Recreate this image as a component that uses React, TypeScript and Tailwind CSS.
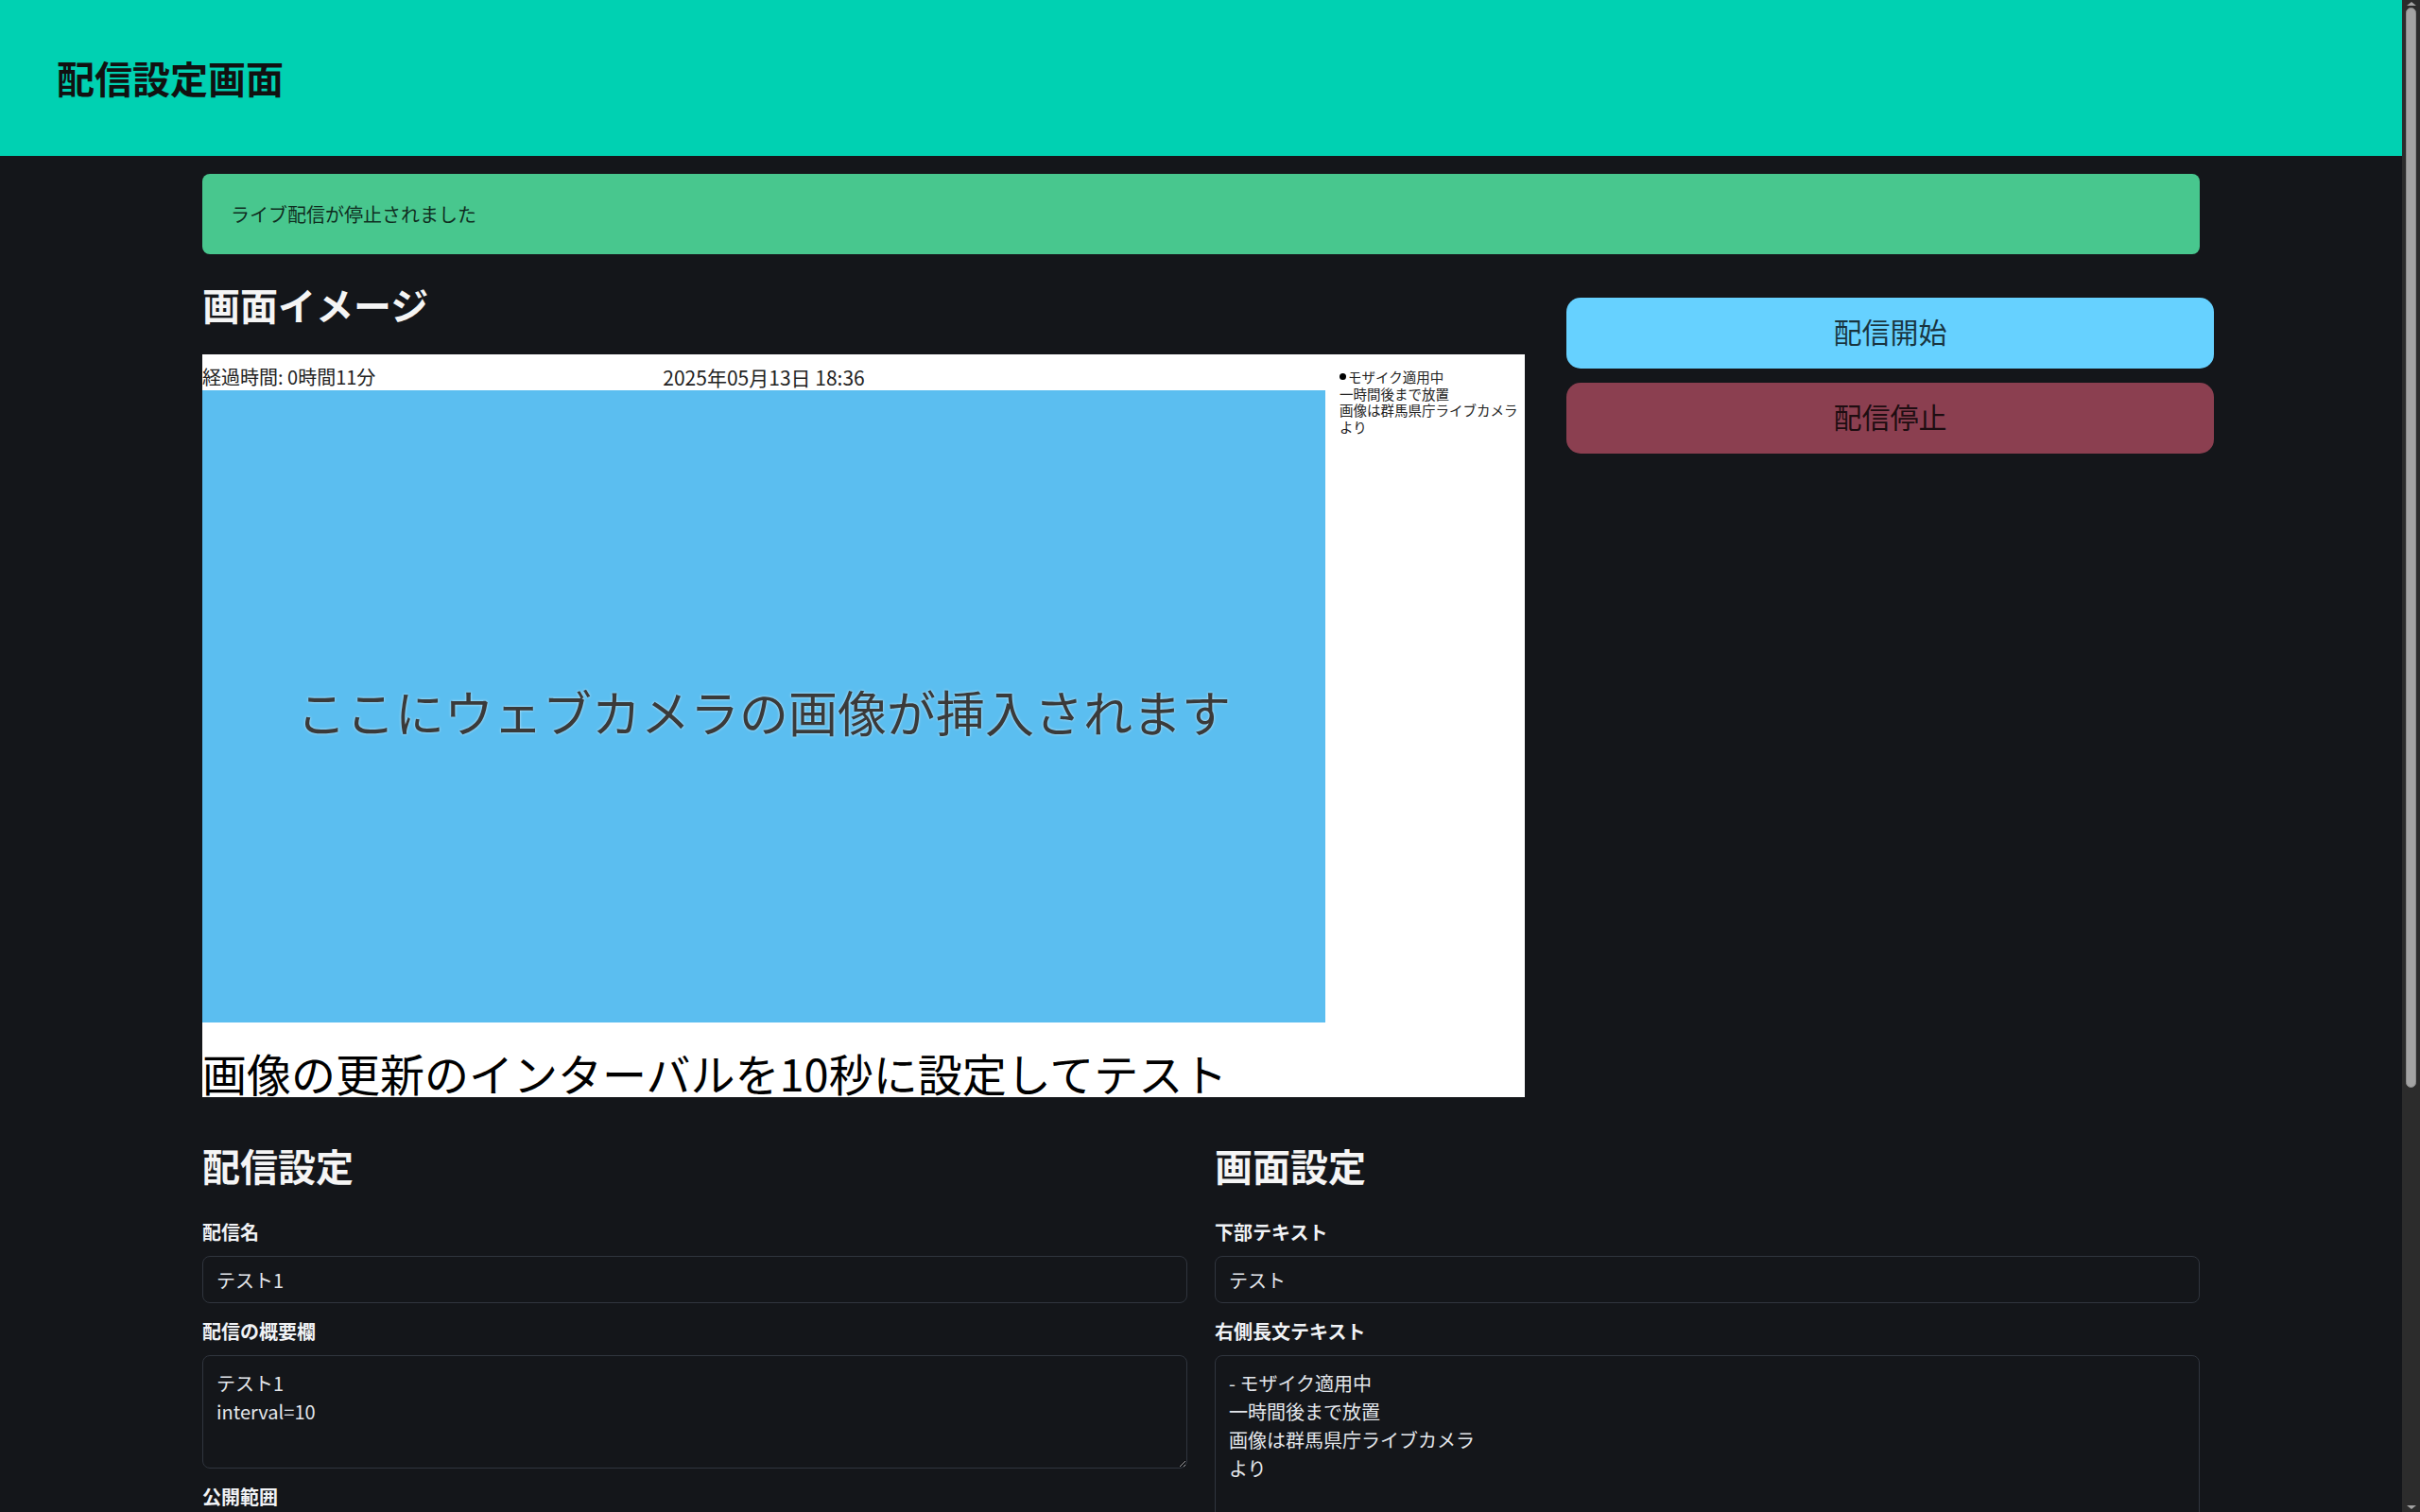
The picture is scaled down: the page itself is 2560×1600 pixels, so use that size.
import { useState } from 'react';

const rightText = `- モザイク適用中
一時間後まで放置
画像は群馬県庁ライブカメラ
より`;

function Field({ label, children }: { label: string; children: React.ReactNode }) {
  return (
    <div className="mb-[15px]">
      <label className="block mb-[10px] text-[20px] leading-[30px] font-bold text-[#f0f2f5]">{label}</label>
      {children}
    </div>
  );
}

function Preview() {
  return (
    <div className="flex w-[1399px] h-[786px] bg-white text-[#222]">
      <div className="flex flex-col w-[1188px]">
        <div className="relative flex items-end h-[38px] pb-[4px] text-[20px] leading-[20px]">
          <span>経過時間: 0時間11分</span>
          <span className="absolute left-0 right-0 bottom-[4px] text-center text-[21px]">2025年05月13日 18:36</span>
        </div>
        <div className="flex items-center justify-center h-[669px] bg-[#5bbef0]">
          <span className="pt-[10px] text-[52px] leading-none text-[#3a3a3a] [text-shadow:0_0_3px_rgba(255,255,255,0.7)]">
            ここにウェブカメラの画像が挿入されます
          </span>
        </div>
        <div className="flex items-end h-[79px] pb-[3px] text-[47px] leading-none text-black whitespace-nowrap">
          画像の更新のインターバルを10秒に設定してテスト
        </div>
      </div>
      <div className="w-[211px] pt-[15px] pl-[15px] text-[14.5px] leading-[17.7px]">
        <div className="flex items-center">
          <span className="mr-[2px] w-[7px] h-[7px] rounded-full bg-black" />
          モザイク適用中
        </div>
        <div>一時間後まで放置</div>
        <div>画像は群馬県庁ライブカメラ</div>
        <div>より</div>
      </div>
    </div>
  );
}

// stand-in for the dark browser scrollbar seen in the screenshot
function ScrollTrack() {
  return (
    <div className="flex flex-col items-center w-[19px] h-screen shrink-0 bg-[#2c2c2c]">
      <div className="mt-[2px] w-0 h-0 border-x-[5px] border-x-transparent border-b-[4px] border-b-[#a3a3a3]" />
      <div className="mt-[2px] w-[11px] h-[1143px] rounded-full bg-[#a3a3a3] border border-[#8a8a8a]" />
      <div className="flex-1" />
      <div className="mb-[3px] w-0 h-0 border-x-[5px] border-x-transparent border-t-[4px] border-t-[#a3a3a3]" />
    </div>
  );
}

export default function App() {
  const [streaming, setStreaming] = useState(false);

  const inputCls =
    'w-full h-[50px] px-[14px] rounded-[8px] border border-[#30353e] bg-[#14161a] text-[20px] text-[#e3e6eb] outline-none';
  const areaCls =
    'block w-full px-[14px] py-[14px] rounded-[8px] border border-[#30353e] bg-[#14161a] text-[20px] leading-[30px] text-[#e3e6eb] outline-none';

  return (
    <div className="flex h-screen bg-[#14161a] [color-scheme:dark] font-['Noto_Sans_CJK_JP','Noto_Sans',sans-serif]">
      <div className="flex-1 h-screen overflow-y-auto [scrollbar-width:none]">
        <div className="min-h-[2200px]">
          <header className="flex items-center h-[165px] px-[60px] bg-[#00d1b2]">
            <h1 className="text-[40px] leading-[45px] font-bold text-[#111]">配信設定画面</h1>
          </header>

          <main className="w-[2113px] mx-auto pt-[19px] pb-[60px]">
            <div className="flex items-center h-[85px] px-[30px] rounded-[8px] bg-[#48c78e] text-[20px] text-black/80">
              {streaming ? 'ライブ配信を開始しました' : 'ライブ配信が停止されました'}
            </div>

            <div className="flex mt-[31px]">
              <section className="w-[1399px] shrink-0">
                <h2 className="mb-[30px] text-[40px] leading-[45px] font-bold text-[#f5f5f5]">画面イメージ</h2>
                <Preview />
              </section>
              <div className="w-[685px] shrink-0 ml-[44px] pt-[15px]">
                <button
                  onClick={() => setStreaming(true)}
                  className="block w-full h-[75px] pb-[4px] rounded-[15px] bg-[#66d1ff] text-[30px] text-black/75"
                >
                  配信開始
                </button>
                <button
                  onClick={() => setStreaming(false)}
                  className="block w-full h-[75px] pb-[4px] mt-[15px] rounded-[15px] bg-[#8b3f50] text-[30px] text-black/80"
                >
                  配信停止
                </button>
              </div>
            </div>

            <div className="grid grid-cols-2 gap-x-[29px] mt-[50px]">
              <section>
                <h2 className="mb-[33px] text-[40px] leading-[45px] font-bold text-[#f5f5f5]">配信設定</h2>
                <Field label="配信名">
                  <input className={inputCls} defaultValue="テスト1" />
                </Field>
                <Field label="配信の概要欄">
                  <textarea className={areaCls} rows={3} defaultValue={'テスト1\ninterval=10'} />
                </Field>
                <Field label="公開範囲">
                  <div className="relative">
                    <select className={inputCls + ' appearance-none'} defaultValue="unlisted">
                      <option value="public">公開</option>
                      <option value="unlisted">限定公開</option>
                      <option value="private">非公開</option>
                    </select>
                    <span className="absolute right-[20px] top-[16px] w-[11px] h-[11px] border-l-[3px] border-b-[3px] border-[#66d1ff] -rotate-45" />
                  </div>
                </Field>
              </section>
              <section>
                <h2 className="mb-[33px] text-[40px] leading-[45px] font-bold text-[#f5f5f5]">画面設定</h2>
                <Field label="下部テキスト">
                  <input className={inputCls} defaultValue="テスト" />
                </Field>
                <Field label="右側長文テキスト">
                  <textarea className={areaCls} rows={10} defaultValue={rightText} />
                </Field>
                <Field label="更新間隔（秒）">
                  <input className={inputCls} defaultValue="10" />
                </Field>
              </section>
            </div>

            <button className="mt-[30px] h-[75px] px-[40px] rounded-[15px] bg-[#00d1b2] text-[30px] text-black/80">
              設定を保存
            </button>
          </main>
        </div>
      </div>
      <ScrollTrack />
    </div>
  );
}
